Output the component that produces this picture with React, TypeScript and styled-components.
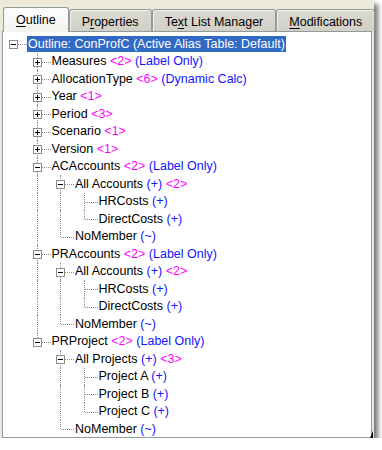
import styled, { createGlobalStyle } from 'styled-components';

type Tag = string;

interface TreeNode {
  label: string;
  tags?: Tag[];
  children?: TreeNode[];
  collapsed?: boolean;
  selected?: boolean;
}

interface FlatRow {
  node: TreeNode;
  depth: number;
  guides: boolean[];
  isLast: boolean;
}

const leaf = (label: string, ...tags: Tag[]): TreeNode => ({ label, tags });
const closed = (label: string, ...tags: Tag[]): TreeNode => ({
  label,
  tags,
  children: [],
  collapsed: true,
});

const outline: TreeNode = {
  label: 'Outline: ConProfC (Active Alias Table: Default)',
  selected: true,
  children: [
    closed('Measures', '<2>', '(Label Only)'),
    closed('AllocationType', '<6>', '(Dynamic Calc)'),
    closed('Year', '<1>'),
    closed('Period', '<3>'),
    closed('Scenario', '<1>'),
    closed('Version', '<1>'),
    {
      label: 'ACAccounts',
      tags: ['<2>', '(Label Only)'],
      children: [
        {
          label: 'All Accounts',
          tags: ['(+)', '<2>'],
          children: [leaf('HRCosts', '(+)'), leaf('DirectCosts', '(+)')],
        },
        leaf('NoMember', '(~)'),
      ],
    },
    {
      label: 'PRAccounts',
      tags: ['<2>', '(Label Only)'],
      children: [
        {
          label: 'All Accounts',
          tags: ['(+)', '<2>'],
          children: [leaf('HRCosts', '(+)'), leaf('DirectCosts', '(+)')],
        },
        leaf('NoMember', '(~)'),
      ],
    },
    {
      label: 'PRProject',
      tags: ['<2>', '(Label Only)'],
      children: [
        {
          label: 'All Projects',
          tags: ['(+)', '<3>'],
          children: [
            leaf('Project A', '(+)'),
            leaf('Project B', '(+)'),
            leaf('Project C', '(+)'),
          ],
        },
        leaf('NoMember', '(~)'),
      ],
    },
  ],
};

// guides[i] tells whether the ancestor at level i still has siblings below
function flatten(
  node: TreeNode,
  depth: number,
  guides: boolean[],
  isLast: boolean,
  out: FlatRow[]
) {
  out.push({ node, depth, guides, isLast });
  if (node.children && !node.collapsed) {
    const next = [...guides, !isLast];
    node.children.forEach((child, i) =>
      flatten(child, depth + 1, next, i === node.children!.length - 1, out)
    );
  }
}

const tabs = [
  { pre: '', key: 'O', post: 'utline', active: true },
  { pre: 'P', key: 'r', post: 'operties' },
  { pre: 'Te', key: 'x', post: 't List Manager' },
  { pre: '', key: 'M', post: 'odifications' },
];

function App() {
  const rows: FlatRow[] = [];
  flatten(outline, 0, [], true, rows);

  return (
    <>
      <GlobalStyle />
      <Dialog>
        <TabBar>
          {tabs.map((t) => (
            <Tab key={t.post} $active={!!t.active}>
              {t.pre}
              <u>{t.key}</u>
              {t.post}
            </Tab>
          ))}
        </TabBar>
        <Panel>
          {rows.map((row, i) => (
            <Row key={i}>
              {row.guides.map((on, g) => (
                <Guide key={g} $on={on} />
              ))}
              <Connector $up={row.depth > 0} $down={row.depth > 0 && !row.isLast}>
                {row.node.children && (
                  <Expander $open={!row.node.collapsed} />
                )}
              </Connector>
              <Label $selected={!!row.node.selected}>
                {row.node.label}
                {row.node.tags?.map((tag) => (
                  <TagText key={tag} $count={tag.startsWith('<')}>
                    {' '}
                    {tag}
                  </TagText>
                ))}
              </Label>
            </Row>
          ))}
        </Panel>
        <Grip />
      </Dialog>
    </>
  );
}

const GlobalStyle = createGlobalStyle`
  html, body {
    margin: 0;
    padding: 0;
    background: #ffffff;
  }
  body {
    font-family: 'Liberation Sans', Arial, sans-serif;
    font-size: 12.5px;
  }
`;

const Dialog = styled.div`
  position: relative;
  width: 374px;
  height: 438px;
  padding-left: 2px;
  box-sizing: border-box;
  background: #ece9d8;
  box-shadow: 4px 4px 5px rgba(0, 0, 0, 0.55);
  display: flex;
  flex-direction: column;
`;

const TabBar = styled.div`
  display: flex;
  align-items: flex-end;
  height: 31px;
  padding-left: 1px;
`;

const Tab = styled.div<{ $active: boolean }>`
  position: relative;
  z-index: ${({ $active }) => ($active ? 1 : 0)};
  height: ${({ $active }) => ($active ? '25px' : '22px')};
  margin-bottom: ${({ $active }) => ($active ? '-1px' : '0')};
  padding: 0 12px;
  box-sizing: border-box;
  display: flex;
  align-items: center;
  padding-top: ${({ $active }) => ($active ? '0' : '2px')};
  border: 1px solid #919b9c;
  border-bottom: none;
  border-radius: 3px 3px 0 0;
  background: ${({ $active }) =>
    $active
      ? 'linear-gradient(#fcfcfe, #f4f3ee)'
      : 'linear-gradient(#dcd9d2, #d2cfc7)'};
  box-shadow: ${({ $active }) =>
    $active ? 'none' : 'inset 1px 1px 0 #f3f1ea'};
  color: #000;
  white-space: nowrap;

  u {
    text-decoration-thickness: 1px;
    text-underline-offset: 2px;
  }
`;

const Panel = styled.div`
  width: 370px;
  height: 407px;
  box-sizing: border-box;
  border: 1px solid #919b9c;
  background: #ffffff;
  padding-top: 3px;
  overflow: hidden;
`;

const Row = styled.div`
  display: flex;
  align-items: stretch;
  height: 17.5px;
  white-space: nowrap;
`;

const Guide = styled.div<{ $on: boolean }>`
  position: relative;
  flex: 0 0 23.5px;

  &::before {
    content: '';
    display: ${({ $on }) => ($on ? 'block' : 'none')};
    position: absolute;
    left: 10px;
    top: 0;
    bottom: 0;
    border-left: 1px dotted #8a8a8a;
  }
`;

const Connector = styled.div<{ $up: boolean; $down: boolean }>`
  position: relative;
  flex: 0 0 24px;

  &::before {
    content: '';
    display: ${({ $up }) => ($up ? 'block' : 'none')};
    position: absolute;
    left: 10px;
    top: 0;
    height: ${({ $down }) => ($down ? '100%' : '9px')};
    border-left: 1px dotted #8a8a8a;
  }

  &::after {
    content: '';
    position: absolute;
    left: 11px;
    right: 0;
    top: 9px;
    border-top: 1px dotted #8a8a8a;
  }
`;

const Expander = styled.span<{ $open: boolean }>`
  position: absolute;
  z-index: 1;
  left: 6px;
  top: 5px;
  width: 9px;
  height: 9px;
  box-sizing: border-box;
  border: 1px solid #8c8c8c;
  background: #ffffff;

  &::before {
    content: '';
    position: absolute;
    left: 1px;
    top: 3px;
    width: 5px;
    height: 1px;
    background: #000;
  }

  &::after {
    content: '';
    display: ${({ $open }) => ($open ? 'none' : 'block')};
    position: absolute;
    left: 3px;
    top: 1px;
    width: 1px;
    height: 5px;
    background: #000;
  }
`;

const Label = styled.span<{ $selected: boolean }>`
  align-self: center;
  height: 16px;
  line-height: 16px;
  padding: 0 1px;
  color: ${({ $selected }) => ($selected ? '#ffffff' : '#000000')};
  background: ${({ $selected }) => ($selected ? '#316ac5' : 'transparent')};
`;

const TagText = styled.span<{ $count: boolean }>`
  color: ${({ $count }) => ($count ? '#ff00ff' : '#1414ff')};
`;

const Grip = styled.div`
  position: absolute;
  right: 1px;
  bottom: 0;
  width: 0;
  height: 0;
  border-left: 3px solid transparent;
  border-bottom: 7px solid #000;
`;

export default App;
